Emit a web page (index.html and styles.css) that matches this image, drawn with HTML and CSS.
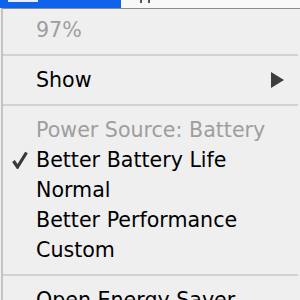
FILE: index.html
```html
<!DOCTYPE html>
<html>
    <head>
        <meta charset="UTF-8">
        <title>Battery menu</title>
        <link rel="stylesheet" href="styles.css">
    </head>
    <body>
        <div class="menubar">
            <div class="menubar-active"><span class="menubar-icon"></span></div>
            <div class="menubar-rest"><span class="menubar-dots"></span></div>
        </div>
        <div class="menu">
            <div class="menu-item disabled"><span class="mark"></span>97%</div>
            <div class="separator"></div>
            <div class="menu-item">
                <span class="mark"></span>Show
                <svg class="submenu-arrow" width="15" height="16" viewBox="0 0 15 16"><path d="M1 0 L14 8 L1 16 Z" fill="#3d3d3d"/></svg>
            </div>
            <div class="separator"></div>
            <div class="menu-item disabled"><span class="mark"></span>Power Source: Battery</div>
            <div class="menu-item">
                <span class="mark">
                    <svg width="16" height="18" viewBox="0 0 16 18"><path d="M1.5 10 L5.5 16 L14.5 1.5" fill="none" stroke="#383838" stroke-width="3.2"/></svg>
                </span>Better Battery Life
            </div>
            <div class="menu-item"><span class="mark"></span>Normal</div>
            <div class="menu-item"><span class="mark"></span>Better Performance</div>
            <div class="menu-item"><span class="mark"></span>Custom</div>
            <div class="separator"></div>
            <div class="menu-item"><span class="mark"></span>Open Energy Saver</div>
        </div>
    </body>
</html>
```

FILE: styles.css
```css
body{
    margin: 0;
    width: 300px;
    height: 300px;
    overflow: hidden;
    background-color: #efefef;
    font-family: 'DejaVu Sans', 'Lucida Grande', sans-serif;
}
.menubar{
    display: flex;
    height: 8px;
}
.menubar-active{
    width: 121px;
    background-color: #0e63ea;
    padding-left: 8px;
    box-sizing: border-box;
}
.menubar-icon{
    display: block;
    width: 30px;
    height: 2px;
    background-color: #e8eefc;
}
.menubar-rest{
    flex: 1;
    background-color: #f8f8f8;
    padding-left: 19px;
}
.menubar-dots{
    display: block;
    width: 10px;
    height: 3px;
    border-left: 2px solid #555;
    border-right: 2px solid #555;
    box-sizing: border-box;
}
.menu{
    border-top: 1px solid #8c8c8c;
    border-left: 2px solid #c4c4c4;
    margin-left: 1px;
    padding-top: 6px;
    height: 300px;
}
.menu-item{
    display: flex;
    align-items: center;
    height: 30px;
    font-size: 20.6px;
    color: #000;
    position: relative;
}
.menu-item.disabled{
    color: #9e9e9e;
}
.mark{
    width: 33px;
    flex-shrink: 0;
    display: flex;
    padding-left: 9px;
    box-sizing: border-box;
}
.submenu-arrow{
    position: absolute;
    right: 15px;
    top: 7px;
}
.separator{
    height: 2px;
    background-color: #d2d2d2;
    margin: 9px 2px 9px 0;
}
```
